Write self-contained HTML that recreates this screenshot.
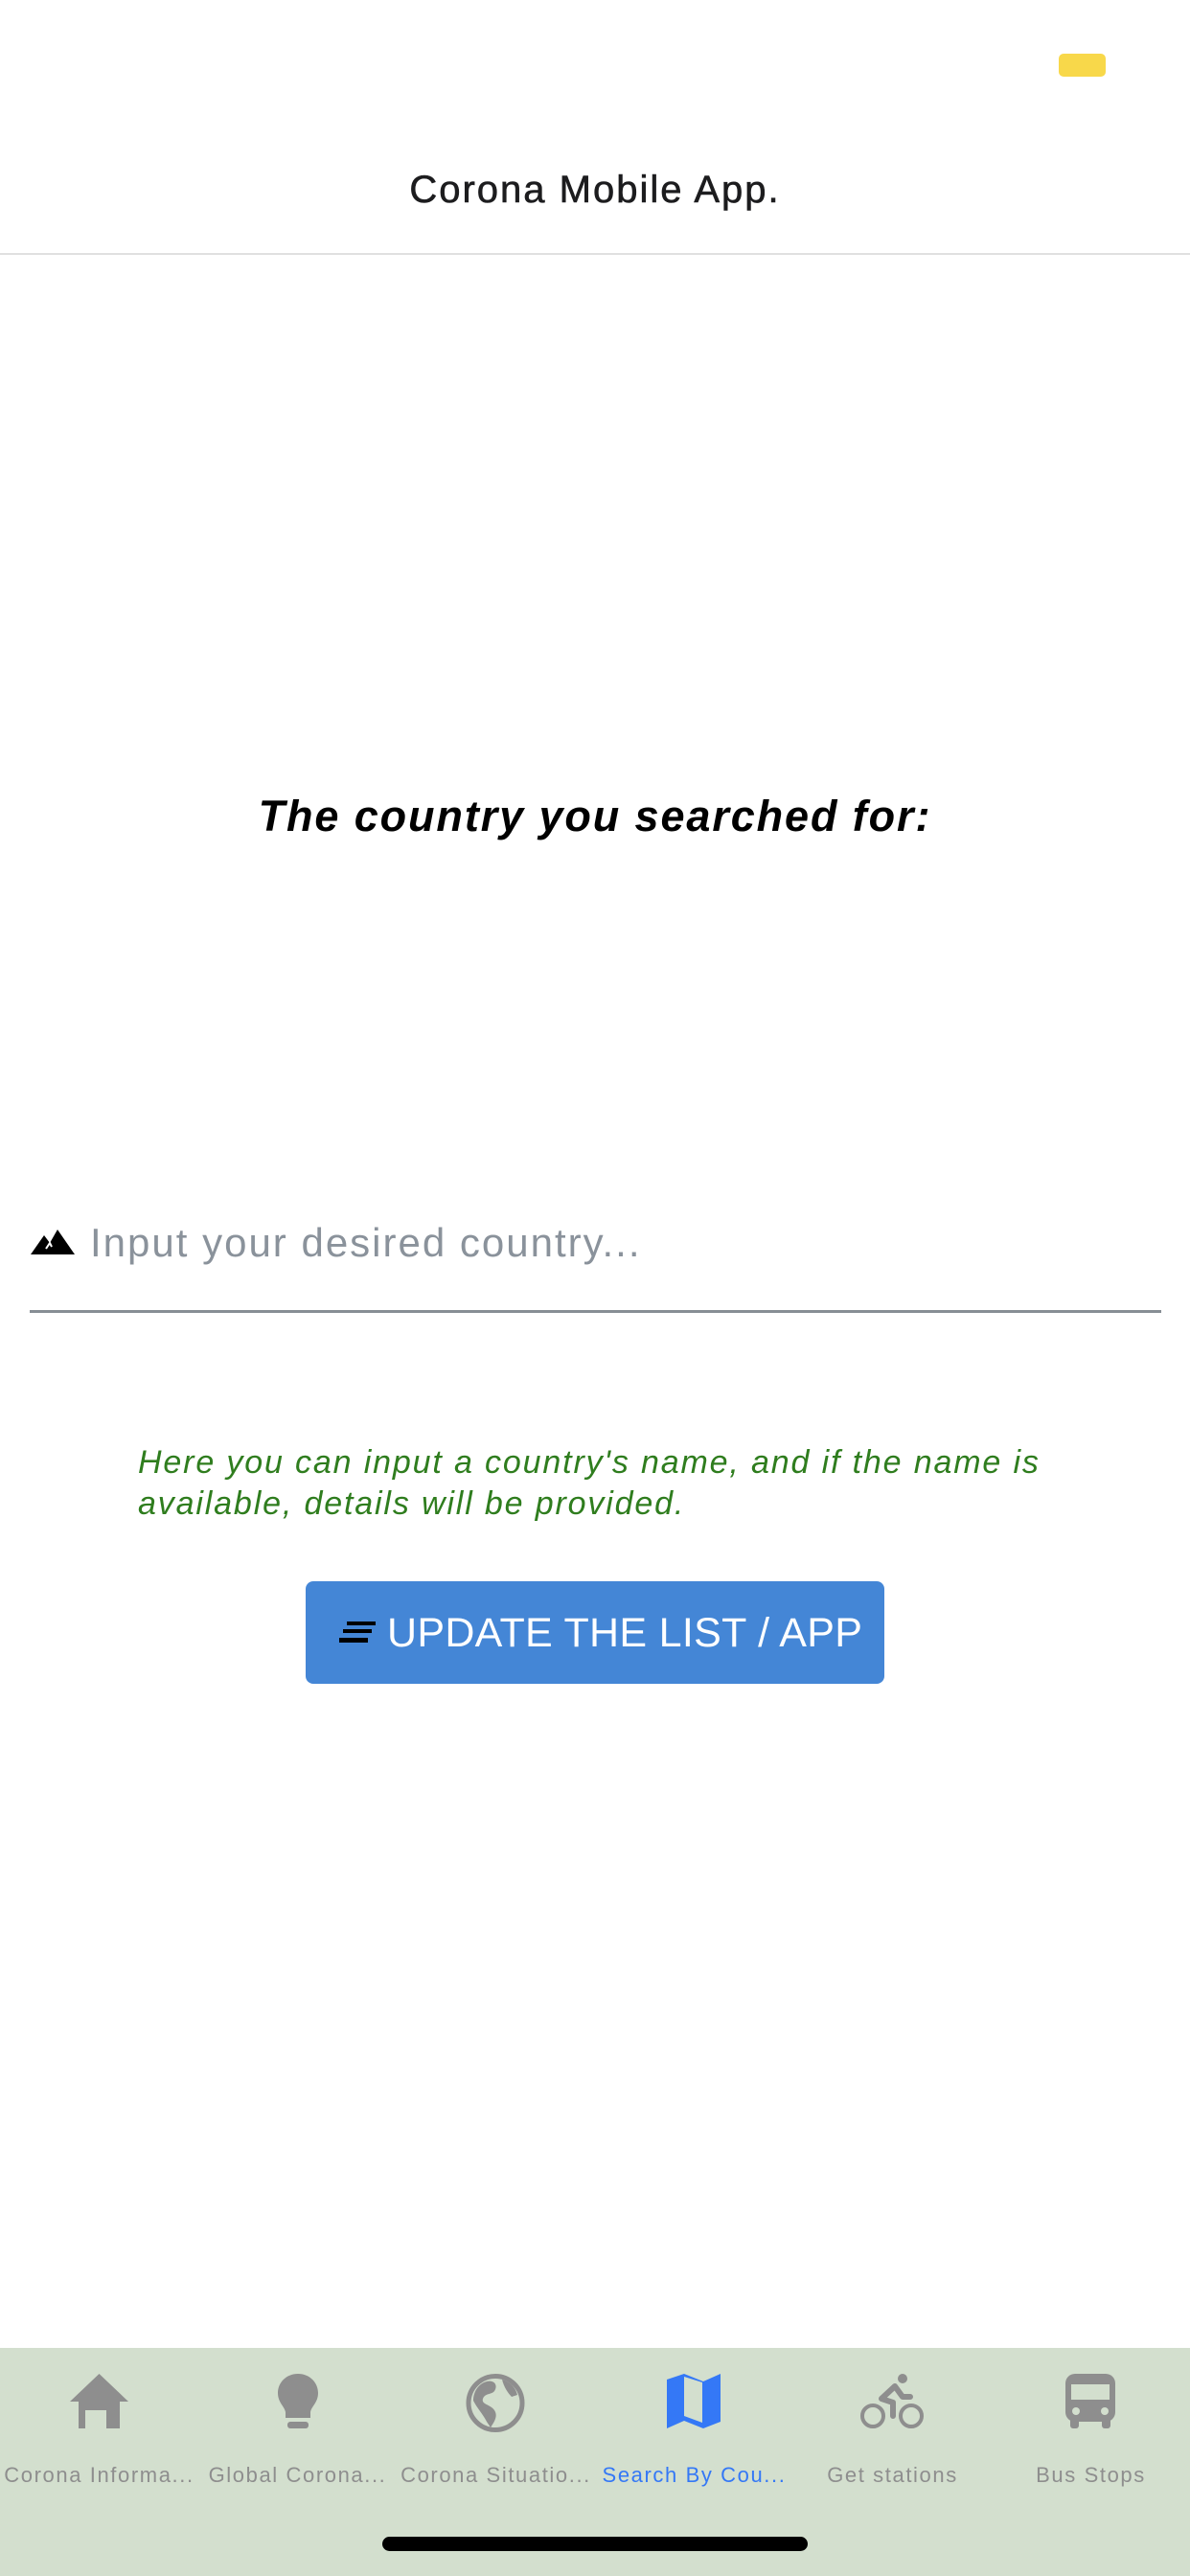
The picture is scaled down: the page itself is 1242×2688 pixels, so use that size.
<!DOCTYPE html>
<html><head><meta charset="utf-8">
<style>
*{margin:0;padding:0;box-sizing:border-box}
body{width:1242px;height:2688px;background:#fff;position:relative;overflow:hidden;font-family:"Liberation Sans",sans-serif}
.abs{position:absolute}
.tab{position:absolute;top:2450px;width:207px;height:238px;text-align:center}
.tab svg{position:absolute;top:27px}
.tab .l{position:absolute;top:120px;left:-4px;width:215px;font-size:22px;letter-spacing:1.6px;color:#8e8e8e;white-space:nowrap;overflow:hidden}
</style></head><body>
<div class="abs" style="left:1105px;top:56px;width:49px;height:24px;background:#f8d84a;border-radius:5px"></div>
<div class="abs" style="left:0;top:176px;width:1242px;text-align:center;font-size:40px;letter-spacing:2px;color:#1c1c1e;-webkit-text-stroke:0.6px #1c1c1e">Corona Mobile App.</div>
<div class="abs" style="left:0;top:264px;width:1242px;height:2px;background:#e0e0e0"></div>

<div class="abs" style="left:0;top:826px;width:1242px;text-align:center;font-size:45px;letter-spacing:1.9px;font-weight:bold;font-style:italic;color:#000">The country you searched for:</div>

<svg class="abs" style="left:32px;top:1283px" width="46" height="26" viewBox="0 0 46 26"><path d="M0 26 L14 6 L20 14 L28 0 L46 26 Z" fill="#000"/><path d="M16 20 L20 14 L22 18" stroke="#fff" stroke-width="2" fill="none"/></svg>
<div class="abs" style="left:94px;top:1273px;font-size:42px;letter-spacing:2px;color:#8a929b">Input your desired country...</div>
<div class="abs" style="left:31px;top:1367px;width:1181px;height:3px;background:#878e95"></div>

<div class="abs" style="left:144px;top:1505px;width:1100px;font-size:34px;line-height:43px;letter-spacing:1.85px;font-style:italic;color:#2f7d1e">Here you can input a country's name, and if the name is<br>available, details will be provided.</div>

<div class="abs" style="left:319px;top:1650px;width:604px;height:107px;background:#4486d6;border-radius:8px"></div>
<svg class="abs" style="left:354px;top:1692px" width="38" height="22" viewBox="0 0 38 22"><rect x="8" y="0" width="30" height="4" fill="#000"/><rect x="4" y="8" width="30" height="4" fill="#000"/><rect x="0" y="17" width="30" height="5" fill="#000"/></svg>
<div class="abs" style="left:404px;top:1680px;font-size:43px;letter-spacing:0.3px;color:#fff;white-space:nowrap">UPDATE THE LIST / APP</div>

<div class="abs" style="left:0;top:2450px;width:1242px;height:238px;background:#d3dfce"></div>

<div class="tab" style="left:0"><svg style="left:73px" width="61" height="57" viewBox="0 0 61 57"><path d="M30.5 0 L61 29 L52 29 L52 57 L38 57 L38 38 L16 38 L16 57 L9 57 L9 29 L0 29 Z" fill="#8e8e8e"/><rect x="16" y="38" width="22" height="19" fill="#d3dfce"/><rect x="38" y="29" width="14" height="28" fill="#8e8e8e"/></svg><div class="l">Corona Informa...</div></div>
<div class="tab" style="left:207px"><svg style="left:82px" width="44" height="57" viewBox="0 0 44 57"><path d="M22 0 C34 0 43 9 43 20 C43 30 36 34 35 40 L35 46 L9 46 L9 40 C8 34 1 30 1 20 C1 9 10 0 22 0Z" fill="#8e8e8e"/><rect x="11" y="50" width="22" height="7" rx="3" fill="#8e8e8e"/></svg><div class="l">Global Corona...</div></div>
<div class="tab" style="left:414px"><svg style="left:72px" width="62" height="61" viewBox="0 0 62 61"><ellipse cx="31" cy="30.5" rx="28" ry="28" fill="none" stroke="#8e8e8e" stroke-width="5"/><path d="M22 8 C30 6 34 12 30 18 C27 22 20 20 18 26 C16 32 26 32 30 38 C34 44 30 50 26 56 L22 50 C18 42 12 36 8 28 C8 18 14 10 22 8Z" fill="#8e8e8e"/><path d="M38 6 C46 8 52 14 54 22 L48 24 C44 20 40 14 38 6Z" fill="#8e8e8e"/></svg><div class="l">Corona Situatio...</div></div>
<div class="tab" style="left:621px"><svg style="left:75px" width="56" height="57" viewBox="0 0 56 57"><path d="M0 6 L18 0 L38 8 L56 0 L56 50 L38 57 L18 49 L0 57 Z" fill="#3478f6"/><path d="M18 3 L37 9 L37 51 L18 44Z" fill="#d3dfce"/></svg><div class="l" style="color:#3478f6">Search By Cou...</div></div>
<div class="tab" style="left:828px"><svg style="left:70px" width="66" height="57" viewBox="0 0 66 57"><circle cx="13" cy="44" r="11" fill="none" stroke="#8e8e8e" stroke-width="4"/><circle cx="53" cy="44" r="11" fill="none" stroke="#8e8e8e" stroke-width="4"/><circle cx="44" cy="5" r="5" fill="#8e8e8e"/><path d="M36 13 L22 26 L34 30 L34 44 M36 13 L44 24 L52 24" stroke="#8e8e8e" stroke-width="6" fill="none" stroke-linecap="round" stroke-linejoin="round"/></svg><div class="l">Get stations</div></div>
<div class="tab" style="left:1035px"><svg style="left:77px" width="52" height="57" viewBox="0 0 52 57"><rect x="0" y="0" width="52" height="50" rx="10" fill="#8e8e8e"/><rect x="6" y="11" width="40" height="16" fill="#d3dfce"/><circle cx="11" cy="39" r="4" fill="#d3dfce"/><circle cx="41" cy="39" r="4" fill="#d3dfce"/><rect x="5" y="44" width="9" height="13" rx="3" fill="#8e8e8e"/><rect x="38" y="44" width="9" height="13" rx="3" fill="#8e8e8e"/></svg><div class="l">Bus Stops</div></div>

<div class="abs" style="left:399px;top:2647px;width:444px;height:15px;background:#000;border-radius:8px"></div>
</body></html>
